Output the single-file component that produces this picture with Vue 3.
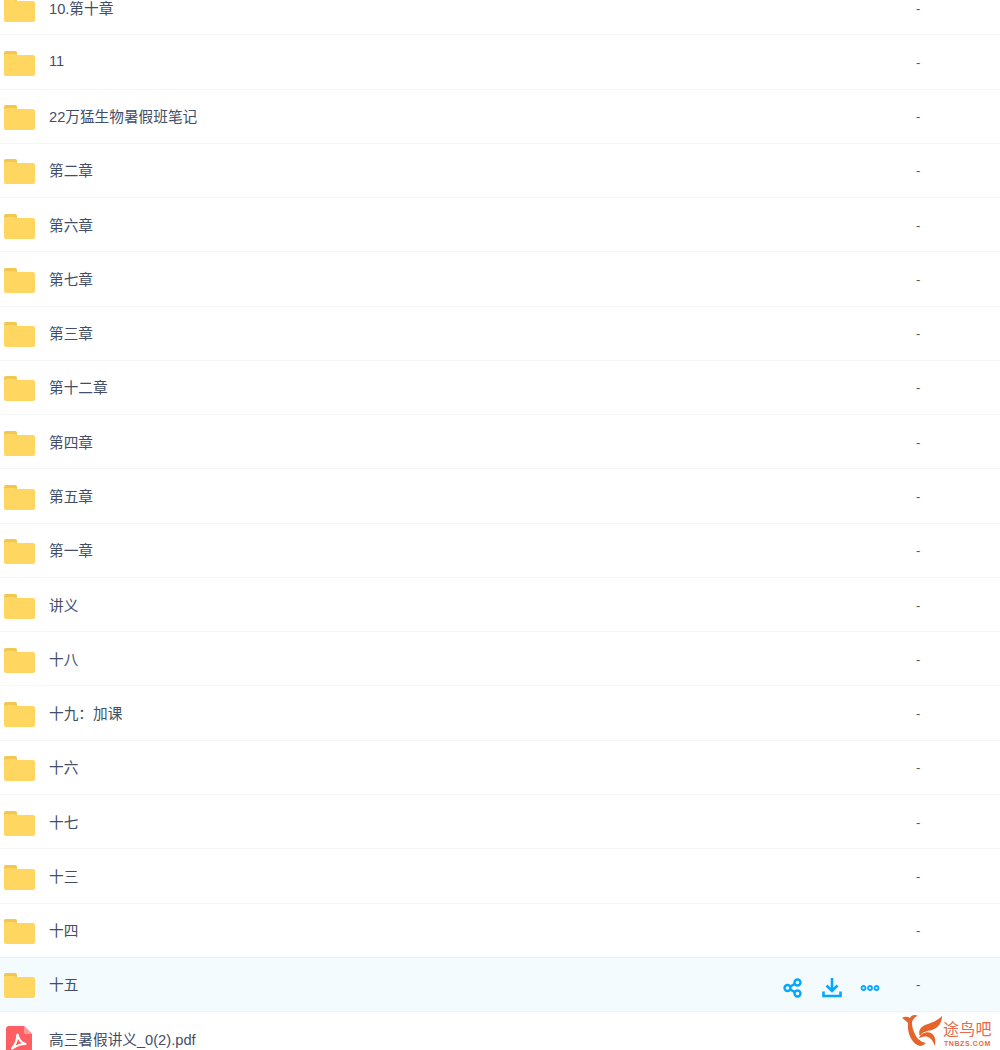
<template>
  <div class="page">
    <div class="file-list">
      <div
        v-for="item in files"
        :key="item.name"
        class="file-row"
        :class="{ active: item.active }"
      >
        <div class="file-icon">
          <svg v-if="item.type === 'folder'" viewBox="0 0 31 27" width="31" height="27">
            <path d="M0 3a2 2 0 0 1 2-2h9a2 2 0 0 1 2 2v2H0z" fill="#f2c650" />
            <path d="M0 6a2 2 0 0 1 2-2h8l3 1h16a2 2 0 0 1 2 2v17a2 2 0 0 1-2 2H2a2 2 0 0 1-2-2z" fill="#ffd660" />
          </svg>
          <svg v-else class="pdf-icon" viewBox="0 0 26 32" width="26" height="32">
            <path d="M3 0h15l8 8v21a3 3 0 0 1-3 3H3a3 3 0 0 1-3-3V3a3 3 0 0 1 3-3z" fill="#ff5e62" />
            <path d="M18 0l8 8h-6a2 2 0 0 1-2-2z" fill="#ff9a9c" />
            <path d="M6 22.500c3-3 5-8 5.500-14 1 5 3 8 8 9.500-5 0-9 1.500-13.500 4.500z" fill="none" stroke="#fff" stroke-width="2.200" stroke-linejoin="round" />
          </svg>
        </div>
        <div class="file-name">{{ item.name }}</div>
        <div v-if="item.active" class="file-actions">
          <svg viewBox="0 0 20 20" width="20" height="20" fill="none" stroke="#06a7ff" stroke-width="2.400">
            <circle cx="4.500" cy="10" r="3" />
            <circle cx="14.500" cy="4.500" r="3" />
            <circle cx="14.500" cy="15.500" r="3" />
            <path d="M7.200 8.500l4.700-2.600M7.200 11.500l4.700 2.600" />
          </svg>
          <svg viewBox="0 0 20 20" width="20" height="20" fill="none" stroke="#06a7ff" stroke-width="2.600">
            <path d="M10 0v12.500M4.500 7.500l5.500 5.500 5.500-5.500" />
            <path d="M1.500 13.500v4.500h17v-4.500" />
          </svg>
          <svg viewBox="0 0 20 20" width="20" height="20" fill="none" stroke="#06a7ff" stroke-width="1.800">
            <circle cx="3.500" cy="10" r="2" />
            <circle cx="10" cy="10" r="2" />
            <circle cx="16.500" cy="10" r="2" />
          </svg>
        </div>
        <div class="file-size">-</div>
      </div>
    </div>

    <div class="watermark">
      <svg viewBox="0 0 40 32" width="40" height="32">
        <path d="M0 4C3 2 6 3 8 4 9 1 13 0 16 2 14 2 12 4 11 6 9 8 10 14 13 20 15 25 19 28 24 29 22 31 20 32 18 32 10 30 5 20 6 9 4 7 2 5 0 4z" fill="#e5642b" />
        <path d="M40 2C40 9 36 14 30 16 25 17 20 18 18 22 16 18 18 13 23 11 29 9 35 7 40 2z" fill="#e5642b" />
        <path d="M17 24C19 19 25 17 29 19 33 21 34 26 33 32 31 27 29 24 26 23 23 22 20 23 17 24z" fill="#e5642b" />
      </svg>
      <div class="brand">
        <span class="brand-name">途鸟吧</span>
        <span class="brand-url">TNBZS.COM</span>
      </div>
    </div>
  </div>
</template>

<script setup>
const names = [
  '10.第十章', '11', '22万猛生物暑假班笔记', '第二章', '第六章', '第七章', '第三章',
  '第十二章', '第四章', '第五章', '第一章', '讲义', '十八', '十九：加课', '十六',
  '十七', '十三', '十四', '十五'
]

const files = [
  ...names.map((name) => ({ name, type: 'folder', active: name === '十五' })),
  { name: '高三暑假讲义_0(2).pdf', type: 'pdf', active: false }
]
</script>

<style>
html, body {
  margin: 0;
  background: #fff;
}
</style>

<style scoped>
.page {
  position: relative;
  width: 1000px;
  height: 1050px;
  overflow: hidden;
  background: #fff;
  font-family: "Liberation Sans", "Noto Sans CJK SC", sans-serif;
}

.file-list {
  margin-top: -19px;
}

.file-row {
  display: flex;
  align-items: center;
  box-sizing: border-box;
  height: 54.28px;
  border-bottom: 1px solid #f5f6f8;
  color: #424e67;
  font-size: 14.67px;
}

.file-row.active {
  background: #f4fbff;
  box-shadow: 0 -1px 0 #e6f4fd;
  border-bottom-color: #e6f4fd;
}

.file-icon {
  display: flex;
  justify-content: center;
  width: 31px;
  margin-left: 4px;
  margin-top: 3px;
}

.pdf-icon {
  margin-top: 3px;
  margin-left: -2px;
}

.file-name {
  flex: 1;
  margin-left: 14px;
  margin-top: -1px;
}

.file-actions {
  display: flex;
  gap: 18.5px;
  margin-right: 36px;
  margin-top: 7px;
}

.file-size {
  width: 84px;
  padding-top: 1px;
  color: #555;
  font-size: 13px;
}

.watermark {
  position: absolute;
  left: 902px;
  top: 1014px;
  display: flex;
  gap: 1px;
}

.brand {
  display: flex;
  flex-direction: column;
  align-items: center;
  margin-top: 7px;
  color: #e8694a;
}

.brand-name {
  font-size: 16px;
  line-height: 18px;
  letter-spacing: 0.3px;
}

.brand-url {
  margin-top: 1px;
  font-size: 7px;
  line-height: 7px;
  font-weight: 700;
  letter-spacing: 0.6px;
}
</style>
